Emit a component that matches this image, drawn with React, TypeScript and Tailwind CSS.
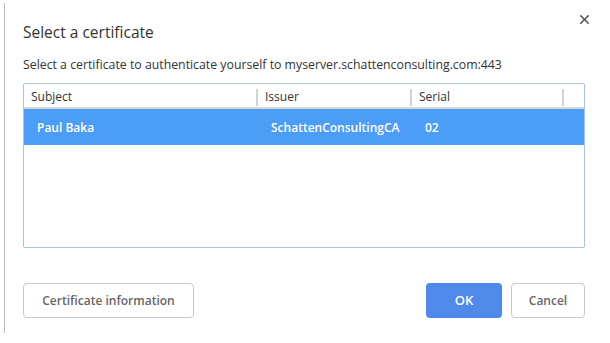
import { X } from "lucide-react";

const columns = [
  { label: "Subject", width: "w-[234px]" },
  { label: "Issuer", width: "w-[154px]" },
  { label: "Serial", width: "w-[152px]" },
];

const rows = [
  { subject: "Paul Baka", issuer: "SchattenConsultingCA", serial: "02", selected: true },
];

export default function App() {
  return (
    <div className="relative w-[610px] h-[343px] bg-white flex overflow-hidden text-[#333] font-['Open_Sans','Noto_Sans',sans-serif]">
      <div className="ml-[4px] mt-[3px] w-px h-[330px] bg-[#b8b8b8]" />

      <div className="flex-1 flex flex-col pl-[18px] pr-[25px]">
        <h1 className="mt-[21px] h-[22px] text-[15.5px] leading-[22px] font-normal text-[#333]">
          Select a certificate
        </h1>
        <p className="mt-[13px] h-[18px] text-[12.3px] leading-[18px] text-[#333]">
          Select a certificate to authenticate yourself to myserver.schattenconsulting.com:443
        </p>

        <div className="mt-[9px] h-[165px] w-[562px] border border-[#a9c3e8] rounded-[2px] flex flex-col">
          <div className="flex h-[25px] pt-[3px] items-center border-b-2 border-[#d6d6d6] text-[12px]">
            {columns.map((c) => (
              <div key={c.label} className={`${c.width} flex items-center h-full pl-[7px]`}>
                <span className="flex-1">{c.label}</span>
                <span className="w-[2px] h-[17px] bg-[#d4d4d4]" />
              </div>
            ))}
          </div>
          {rows.map((r) => (
            <div
              key={r.subject}
              className={`flex h-[36px] pt-[1px] items-center text-[12px] font-semibold ${r.selected ? "bg-[#4c9df7] text-white" : ""}`}
            >
              <span className="w-[234px] pl-[13px]">{r.subject}</span>
              <span className="w-[154px] pl-[13px]">{r.issuer}</span>
              <span className="pl-[13px]">{r.serial}</span>
            </div>
          ))}
        </div>

        <div className="mt-[35px] flex items-center">
          <button className="w-[171px] h-[35px] rounded-[4px] border border-[#c8c8c8] bg-white text-[12px] font-semibold text-[#666]">
            Certificate information
          </button>
          <div className="flex-1" />
          <button className="w-[76px] h-[35px] rounded-[4px] bg-[#5089ec] text-[13px] font-semibold text-white">
            OK
          </button>
          <button className="ml-[9px] w-[74px] h-[35px] rounded-[4px] border border-[#c8c8c8] bg-white text-[12px] font-semibold text-[#666]">
            Cancel
          </button>
        </div>
      </div>

      <button className="absolute top-[12px] right-[18px] text-[#555]" aria-label="Close">
        <X className="w-[15px] h-[15px]" strokeWidth={2.6} />
      </button>
    </div>
  );
}
